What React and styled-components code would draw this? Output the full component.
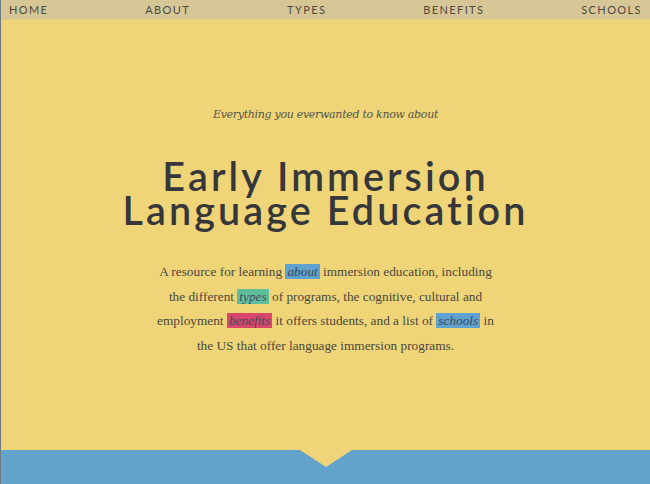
import React from "react";
import styled, { createGlobalStyle } from "styled-components";

const Global = createGlobalStyle`
  html, body { margin: 0; padding: 0; background: #63a3cc; }
  body { overflow: hidden; }
`;

const Page = styled.div`
  border-left: 1px solid #6f7984;
  box-shadow: inset 1px 0 0 rgba(255, 255, 255, 0.35);
  height: 484px;
  overflow: hidden;
  display: flex;
  flex-direction: column;
`;

const Nav = styled.nav`
  height: 19px;
  flex: none;
  background: #d7c797;
  border-bottom: 1px solid #e2cf86;
  display: flex;
  align-items: center;
  justify-content: space-between;
  padding: 0 8px 0 8px;
`;

const NavLink = styled.a`
  font-family: "Lato", "Open Sans", sans-serif;
  font-size: 11px;
  letter-spacing: 1.4px;
  text-transform: uppercase;
  color: #4d4a40;
  text-decoration: none;
  line-height: 19px;
`;

const Hero = styled.header`
  background: #efd577;
  height: 430px;
  flex: none;
  display: flex;
  flex-direction: column;
  align-items: center;
  padding-top: 87px;
  box-sizing: border-box;
`;

const Kicker = styled.p`
  margin: 0;
  font-family: "DejaVu Serif", serif;
  font-style: italic;
  font-size: 11px;
  line-height: 16px;
  color: #55524a;
  letter-spacing: -0.3px;
`;

const Title = styled.h1`
  margin: 36px 0 0;
  font-family: "Lato", "Noto Sans", sans-serif;
  font-weight: 600;
  font-size: 39.5px;
  line-height: 34px;
  letter-spacing: 3.1px;
  color: #36373a;
  text-align: center;
`;

const Lead = styled.p`
  margin: 33px 0 0;
  width: 345px;
  font-family: "Liberation Serif", serif;
  font-size: 13.3px;
  line-height: 24.5px;
  color: #4b473e;
  text-align: center;
`;

const Tag = styled.em`
  background: ${(p) => p.$bg};
  color: #3e4b5a;
  padding: 0 2px;
`;

const Fold = styled.section`
  position: relative;
  flex: 1;
  background: #63a3cc;
  &::before {
    content: "";
    position: absolute;
    left: 50%;
    top: 0;
    transform: translateX(-50%);
    border-left: 26px solid transparent;
    border-right: 26px solid transparent;
    border-top: 17px solid #efd577;
  }
`;

export default function App() {
  return (
    <>
      <Global />
      <Page>
        <Nav>
          <NavLink href="#">Home</NavLink>
          <NavLink href="#">About</NavLink>
          <NavLink href="#">Types</NavLink>
          <NavLink href="#">Benefits</NavLink>
          <NavLink href="#">Schools</NavLink>
        </Nav>
        <Hero>
          <Kicker>Everything you everwanted to know about</Kicker>
          <Title>
            Early Immersion
            <br />
            Language Education
          </Title>
          <Lead>
            A resource for learning <Tag $bg="#5fa2cf">about</Tag> immersion education, including
            the different <Tag $bg="#5fbf9c">types</Tag> of programs, the cognitive, cultural and
            employment <Tag $bg="#d9466c">benefits</Tag> it offers students, and a list of{" "}
            <Tag $bg="#5fa2cf">schools</Tag> in the US that offer language immersion programs.
          </Lead>
        </Hero>
        <Fold />
      </Page>
    </>
  );
}
